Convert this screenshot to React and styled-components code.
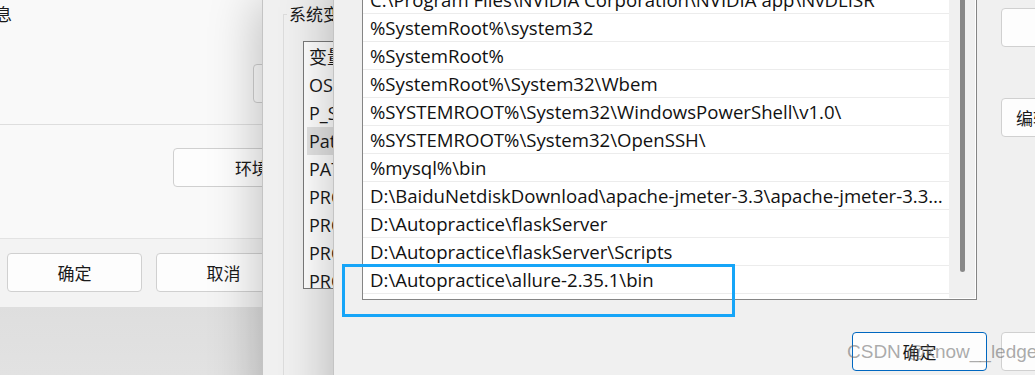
import React from "react";
import styled, { createGlobalStyle } from "styled-components";

const GlobalStyle = createGlobalStyle`
  body {
    margin: 0;
    font-family: "Open Sans", "Noto Sans CJK SC", sans-serif;
    color: #1a1a1a;
  }
`;

const pathRows = [
  "C:\\Program Files\\NVIDIA Corporation\\NVIDIA app\\NvDLISR",
  "%SystemRoot%\\system32",
  "%SystemRoot%",
  "%SystemRoot%\\System32\\Wbem",
  "%SYSTEMROOT%\\System32\\WindowsPowerShell\\v1.0\\",
  "%SYSTEMROOT%\\System32\\OpenSSH\\",
  "%mysql%\\bin",
  "D:\\BaiduNetdiskDownload\\apache-jmeter-3.3\\apache-jmeter-3.3\\bin",
  "D:\\Autopractice\\flaskServer",
  "D:\\Autopractice\\flaskServer\\Scripts",
  "D:\\Autopractice\\allure-2.35.1\\bin",
  "",
];

const sysVars = ["OS", "P_SHELL", "Path", "PATHEXT", "PROCESSOR_ARCHITECTURE", "PROCESSOR_IDENTIFIER", "PROCESSOR_LEVEL", "PROCESSOR_REVISION"];

function App() {
  return (
    <>
      <GlobalStyle />
      <Desktop>
        {/* 系统属性 */}
        <Window $left={-40} $top={0} $width={420} $height={307} $bg="#f9f9f9">
          <InfoTitle>信息</InfoTitle>
          <SettingsRow>
            <Button $width={120}>设置(T)...</Button>
          </SettingsRow>
          <Divider />
          <EnvRow>
            <Button $width={228}>环境变量(N)...</Button>
          </EnvRow>
          <Footer>
            <Button $width={135}>确定</Button>
            <Button $width={135}>取消</Button>
          </Footer>
        </Window>

        {/* 环境变量 */}
        <Window $left={262} $top={0} $width={700} $height={420} $bg="#f0f0f0" $shadow>
          <GroupBox>
            <GroupLabel>系统变量(S)</GroupLabel>
            <VarList>
              <VarRow>变量</VarRow>
              {sysVars.map((v) => (
                <VarRow key={v} $selected={v === "Path"}>{v}</VarRow>
              ))}
            </VarList>
          </GroupBox>
        </Window>

        {/* 编辑环境变量 */}
        <Window $left={333} $top={-20} $width={760} $height={440} $bg="#f0f0f0" $shadow>
          <EditBody>
            <PathList>
              <PathRows>
                {pathRows.map((p, i) => (
                  <PathRow key={i}>{p}</PathRow>
                ))}
              </PathRows>
              <ScrollTrack>
                <ScrollThumb />
              </ScrollTrack>
            </PathList>
            <SideButtons>
              <Button $width={130}></Button>
              <Button $width={130} $align="left">编辑(E)</Button>
            </SideButtons>
          </EditBody>
          <BottomButtons>
            <Button $width={135} $primary>确定</Button>
            <Button $width={135}>取消</Button>
          </BottomButtons>
        </Window>

        <Highlight />
        <Watermark>CSDN @know__ledge</Watermark>
      </Desktop>
    </>
  );
}

const Desktop = styled.div`
  position: relative;
  width: 1035px;
  height: 375px;
  overflow: hidden;
  background: linear-gradient(180deg, #cdcdcd 0%, #e2e2e2 100%);
`;

const Window = styled.div`
  position: absolute;
  left: ${(p) => p.$left}px;
  top: ${(p) => p.$top}px;
  width: ${(p) => p.$width}px;
  height: ${(p) => p.$height}px;
  background: ${(p) => p.$bg};
  display: flex;
  flex-direction: column;
  box-sizing: border-box;
  border-left: 1px solid ${(p) => (p.$shadow ? "#c4c4c4" : "transparent")};
  box-shadow: ${(p) => (p.$shadow ? "-6px 0 45px rgba(0,0,0,0.22)" : "none")};
`;

const InfoTitle = styled.div`
  font-size: 17px;
  line-height: 22px;
  margin: 4px 0 0 17px;
  height: 22px;
`;

const Button = styled.div`
  width: ${(p) => p.$width}px;
  height: 39px;
  box-sizing: border-box;
  background: #fdfdfd;
  border: 1px solid ${(p) => (p.$primary ? "#0067c0" : "#d0d0d0")};
  border-radius: 4px;
  display: flex;
  align-items: center;
  justify-content: ${(p) => (p.$align === "left" ? "flex-start" : "center")};
  padding-left: ${(p) => (p.$align === "left" ? "14px" : "0")};
  font-size: 17px;
  color: #1a1a1a;
  white-space: nowrap;
  flex-shrink: 0;
`;

const SettingsRow = styled.div`
  display: flex;
  padding-left: 292px;
  margin-top: 38px;
`;

const Divider = styled.div`
  height: 1px;
  background: #dedede;
  margin-top: 21px;
`;

const EnvRow = styled.div`
  display: flex;
  padding-left: 212px;
  margin-top: 23px;
`;

const Footer = styled.div`
  margin-top: 51px;
  flex: 1;
  border-top: 1px solid #e3e3e3;
  background: #f3f3f3;
  display: flex;
  gap: 14px;
  padding: 14px 0 0 46px;
`;

const GroupBox = styled.div`
  position: relative;
  margin: 14px 0 0 20px;
  flex: 1;
  border-left: 1px solid #dcdcdc;
  border-top: 1px solid #dcdcdc;
  padding: 26px 0 0 19px;
`;

const GroupLabel = styled.div`
  position: absolute;
  left: 3px;
  top: -11px;
  padding: 0 2px;
  background: #f0f0f0;
  font-size: 17px;
  line-height: 22px;
`;

const VarList = styled.div`
  width: 420px;
  height: 248px;
  box-sizing: border-box;
  border: 1px solid #7a7a7a;
  background: #ffffff;
  overflow: hidden;
  padding: 1px 3px;
`;

const VarRow = styled.div`
  height: 28px;
  line-height: 28px;
  font-size: 18px;
  padding-left: 2px;
  white-space: nowrap;
  background: ${(p) => (p.$selected ? "#e3e3e3" : "transparent")};
`;

const EditBody = styled.div`
  display: flex;
  align-items: flex-start;
  padding: 5px 0 0 28px;
`;

const PathList = styled.div`
  width: 615px;
  height: 315px;
  flex-shrink: 0;
  box-sizing: border-box;
  border: 1px solid #858585;
  background: #ffffff;
  display: flex;
  overflow: hidden;
`;

const PathRows = styled.div`
  flex: 1;
  min-width: 0;
`;

const PathRow = styled.div`
  height: 28px;
  box-sizing: border-box;
  border-bottom: 1px solid #ececec;
  padding: 0 6px 0 7px;
  font-size: 18.6px;
  line-height: 27px;
  white-space: nowrap;
  overflow: hidden;
  text-overflow: ellipsis;
  color: #111;
`;

const ScrollTrack = styled.div`
  width: 26px;
  flex-shrink: 0;
  background: #f0f0f0;
  display: flex;
  justify-content: center;
  padding-bottom: 28px;
  border-right: 1px solid #fff;
  border-bottom: 1px solid #fff;
`;

const ScrollThumb = styled.div`
  width: 5px;
  height: 286px;
  background: #888888;
  border-radius: 0 0 3px 3px;
`;

const SideButtons = styled.div`
  display: flex;
  flex-direction: column;
  flex-shrink: 0;
  gap: 51px;
  margin: 23px 0 0 24px;
`;

const BottomButtons = styled.div`
  display: flex;
  gap: 14px;
  margin: 32px 0 0 518px;
`;

const Highlight = styled.div`
  position: absolute;
  left: 342px;
  top: 264px;
  width: 393px;
  height: 53px;
  box-sizing: border-box;
  border: 3px solid #16a5f8;
`;

const Watermark = styled.div`
  position: absolute;
  left: 847px;
  top: 338px;
  font-family: "Liberation Sans", Arial, sans-serif;
  font-size: 19px;
  line-height: 28px;
  color: rgba(100, 100, 100, 0.55);
  white-space: nowrap;
  pointer-events: none;
`;

export default App;
